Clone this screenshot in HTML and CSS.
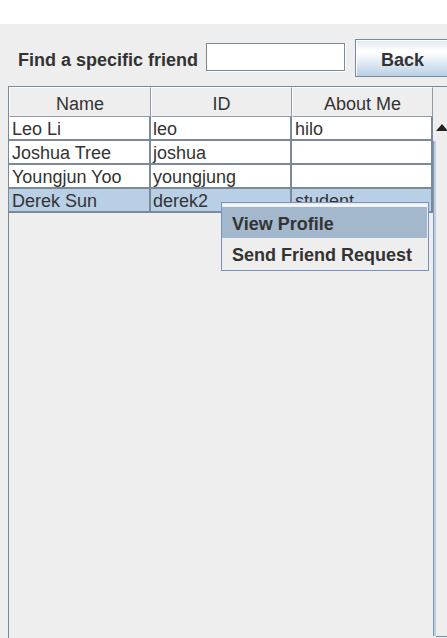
FILE: index.html
```html
<!DOCTYPE html>
<html>
<head>
<meta charset="utf-8">
<link rel="stylesheet" href="styles.css">
</head>
<body>
<div class="topbar"></div>
<div class="panel">
  <div class="toolbar">
    <span class="label">Find a specific friend</span>
    <input class="field" type="text">
    <button class="btn">Back</button>
  </div>
  <div class="scrollpane">
    <div class="viewport">
      <div class="thead">
        <div class="th c1">Name</div>
        <div class="th c2">ID</div>
        <div class="th c3">About Me</div>
      </div>
      <div class="row">
        <div class="td c1">Leo Li</div>
        <div class="td c2">leo</div>
        <div class="td c3">hilo</div>
      </div>
      <div class="row">
        <div class="td c1">Joshua Tree</div>
        <div class="td c2">joshua</div>
        <div class="td c3"></div>
      </div>
      <div class="row">
        <div class="td c1">Youngjun Yoo</div>
        <div class="td c2">youngjung</div>
        <div class="td c3"></div>
      </div>
      <div class="row selected">
        <div class="td c1">Derek Sun</div>
        <div class="td c2">derek2</div>
        <div class="td c3">student</div>
      </div>
    </div>
    <div class="vscroll">
      <div class="corner"></div>
      <div class="sb-up">
        <svg width="12" height="7" viewBox="0 0 12 7"><polygon points="0,7 12,7 6,0" fill="#222"/></svg>
      </div>
      <div class="sb-track"></div>
      <div class="sb-down"></div>
    </div>
  </div>
  <div class="popup">
    <div class="popup-hl"></div>
    <div class="menu-item active">View Profile</div>
    <div class="menu-item">Send Friend Request</div>
  </div>
</div>
</body>
</html>
```
FILE: styles.css
```css
html, body {
  margin: 0;
  padding: 0;
  overflow: hidden;
  width: 447px;
  height: 638px;
  background: #ffffff;
  font-family: "Liberation Sans", Arial, sans-serif;
  color: #333333;
}

.topbar {
  height: 24px;
  background: #ffffff;
}

.panel {
  position: relative;
  height: 614px;
  background: #eeeeee;
  overflow: hidden;
}

.toolbar {
  display: flex;
  align-items: flex-start;
  height: 38px;
  padding: 15px 0 0 18px;
}

.label {
  flex-shrink: 0;
  width: 188px;
  margin-top: 11px;
  font-size: 18px;
  font-weight: bold;
  line-height: 21px;
  white-space: nowrap;
}

.field {
  flex-shrink: 0;
  box-sizing: border-box;
  width: 139px;
  height: 28px;
  margin: 4px 0 0 0;
  padding: 0;
  border: 1px solid #7a8a99;
  box-shadow: 1px 1px 0 #ffffff;
  background: #ffffff;
  outline: none;
}

.btn {
  flex-shrink: 0;
  box-sizing: border-box;
  width: 95px;
  height: 38px;
  margin: 0 0 0 10px;
  padding: 4px 0 0 0;
  border: 1px solid #7a8a99;
  box-shadow: inset 1px 1px 0 #ffffff;
  background: linear-gradient(to bottom, #dde8f3 0%, #ffffff 30%, #ffffff 35%, #b8cfe5 100%);
  font-family: "Liberation Sans", Arial, sans-serif;
  font-size: 18px;
  font-weight: bold;
  line-height: 32px;
  color: #333333;
  text-align: center;
}

.scrollpane {
  display: flex;
  width: 442px;
  height: 580px;
  margin: 9px 0 0 8px;
  border-left: 1px solid #7a8a99;
  border-top: 1px solid #7a8a99;
}

.viewport {
  width: 424px;
  flex-shrink: 0;
  background: #eeeeee;
}

.thead {
  display: flex;
  height: 30px;
}

.th {
  box-sizing: border-box;
  height: 30px;
  padding-top: 6px;
  border-top: 1px solid #ffffff;
  border-left: 1px solid #ffffff;
  border-right: 1px solid #8e9aa7;
  border-bottom: 1px solid #8e9aa7;
  background: #eeeeee;
  font-size: 18px;
  line-height: 21px;
  text-align: center;
  white-space: nowrap;
}

.c1 { width: 142px; }
.c2 { width: 141px; }
.c3 { width: 141px; }

.row {
  display: flex;
  height: 24px;
}

.td {
  box-sizing: border-box;
  height: 24px;
  padding: 2px 0 0 3px;
  border-right: 2px solid #7a8a99;
  border-bottom: 2px solid #7a8a99;
  background: #ffffff;
  font-size: 18px;
  line-height: 21px;
  white-space: nowrap;
  overflow: hidden;
}

.td.c2 {
  padding-left: 2px;
}

.row.selected .td {
  background: #b8cfe5;
}

.vscroll {
  display: flex;
  flex-direction: column;
  width: 17px;
  flex-shrink: 0;
}

.corner {
  height: 30px;
  background: #eeeeee;
}

.sb-up {
  display: flex;
  justify-content: center;
  box-sizing: border-box;
  height: 24px;
  padding-top: 7px;
  padding-left: 1px;
  background: #eeeeee;
}

.sb-up svg {
  display: block;
}

.sb-track {
  height: 495px;
  background: linear-gradient(to right, #8396ad 0, #8396ad 1px, #bccfe4 1px, #bccfe4 3px, #eeeeee 3px);
}

.sb-down {
  height: 20px;
  margin-left: 3px;
  border-top: 1px solid #7d8fa6;
  background: #eeeeee;
}

.popup {
  position: absolute;
  left: 221px;
  top: 178px;
  box-sizing: border-box;
  width: 208px;
  padding: 2px 1px 1px 0;
  border: 1px solid #7891c4;
  background: #eeeeee;
}

.popup-hl {
  height: 1px;
  margin-bottom: 1px;
  background: #ffffff;
}

.menu-item {
  box-sizing: border-box;
  height: 31px;
  padding: 4px 0 0 10px;
  font-size: 18px;
  font-weight: bold;
  line-height: 27px;
  white-space: nowrap;
}

.menu-item.active {
  background: #a3b8cc;
}
```
